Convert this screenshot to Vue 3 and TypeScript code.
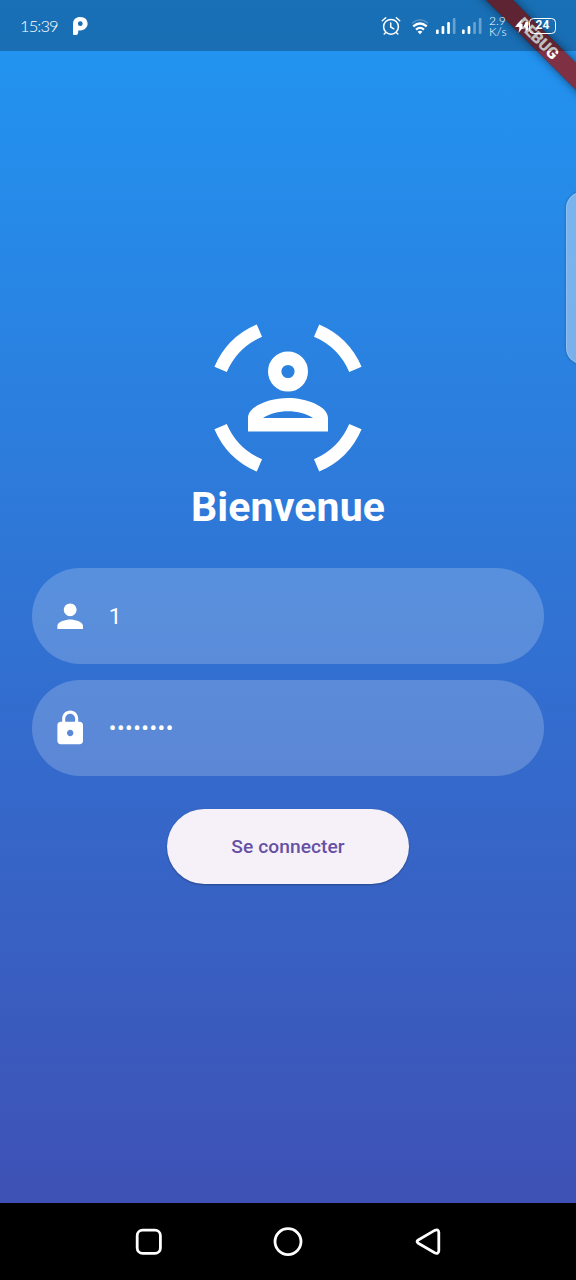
<script setup lang="ts">
import { ref } from 'vue'

interface Field {
  id: string
  icon: string
  value: string
}

interface Signal {
  id: string
  opacities: number[]
}

const person =
  'M12 12c2.21 0 4-1.79 4-4s-1.79-4-4-4-4 1.79-4 4 1.79 4 4 4zm0 2c-2.67 0-8 1.34-8 4v2h16v-2c0-2.66-5.33-4-8-4z'
const lock =
  'M18 8h-1V6c0-2.76-2.24-5-5-5S7 3.24 7 6v2H6c-1.1 0-2 .9-2 2v10c0 1.1.9 2 2 2h12c1.1 0 2-.9 2-2V10c0-1.1-.9-2-2-2zm-6 9c-1.1 0-2-.9-2-2s.9-2 2-2 2 .9 2 2-.9 2-2 2zm3.1-9H8.9V6c0-1.71 1.39-3.1 3.1-3.1 1.71 0 3.1 1.39 3.1 3.1v2z'

const fields = ref<Field[]>([
  { id: 'user', icon: person, value: '1' },
  { id: 'password', icon: lock, value: '••••••••' },
])

const signals: Signal[] = [
  { id: 'sim1', opacities: [1, 1, 1, 0.35] },
  { id: 'sim2', opacities: [1, 1, 0.35, 0.35] },
]
const barHeights = [4.5, 8, 12, 16]
</script>

<template>
  <div class="screen">
    <main class="login">
      <svg class="logo" viewBox="-80 -80 160 160" aria-hidden="true">
        <g fill="none" stroke="#fff" stroke-width="13.4">
          <path
            v-for="angle in [0, 90, 180, 270]"
            :key="angle"
            d="M28.6 -67.4A73.2 73.2 0 0 1 67.4 -28.6"
            :transform="`rotate(${angle})`"
          />
        </g>
        <circle cy="-26.5" r="13.3" fill="none" stroke="#fff" stroke-width="13.4" />
        <path
          fill="#fff"
          fill-rule="evenodd"
          d="M-40 33.5V20C-40 8 -18 0 0 0S40 8 40 20V33.5ZM-25 20H25C19 16 9 13.3 0 13.3S-19 16 -25 20Z"
        />
      </svg>
      <h1 class="title">Bienvenue</h1>
      <div class="fields">
        <label v-for="field in fields" :key="field.id" class="field">
          <svg class="field-icon" viewBox="0 0 24 24" aria-hidden="true">
            <path :d="field.icon" fill="#fff" />
          </svg>
          <span class="field-value">{{ field.value }}</span>
        </label>
      </div>
      <button class="submit" type="button">Se connecter</button>
    </main>

    <div class="edge-handle"></div>

    <div class="debug-clip"><div class="debug">DEBUG</div></div>

    <header class="status">
      <span class="time">15:39</span>
      <svg class="app-mark" width="17" height="20" viewBox="0 0 17 20" aria-hidden="true">
        <path
          fill="#fff"
          fill-rule="evenodd"
          d="M1 8C1 3.5 4 1 8.3 1C12.6 1 15.6 3.8 15.6 7.6S12.6 14.4 8.6 14.4H6.2V16.5Q6 19 4 19H2Q1 19 1 18ZM8.3 5.3A2.4 2.4 0 1 0 8.3 10.1A2.4 2.4 0 1 0 8.3 5.3Z"
        />
      </svg>
      <div class="indicators">
        <svg class="alarm" width="20" height="20" viewBox="0 0 20 20" aria-hidden="true">
          <g fill="none" stroke="#fff" stroke-width="1.5" stroke-linecap="round" stroke-linejoin="round">
            <circle cx="10" cy="10.8" r="7.4" />
            <path d="M9.7 7V11L12.8 12.8M1.3 4.7L4.7 1.8M18.7 4.7L15.3 1.8M4.7 16.5L3.2 18M15.3 16.5L16.8 18" />
          </g>
        </svg>
        <svg class="wifi" width="18" height="16" viewBox="0 0 18 16" aria-hidden="true">
          <g fill="none" stroke="#fff" stroke-width="2.2">
            <path d="M1 4.2Q9 -2.6 17 4.2" opacity="0.25" stroke-width="1.5" />
            <path d="M2.2 7.4Q9 1.6 15.8 7.4" />
            <path d="M5 10.6Q9 7.2 13 10.6" />
          </g>
          <path d="M6.6 12.7Q9 10.6 11.4 12.7L9 15.2Z" fill="#fff" />
        </svg>
        <svg
          v-for="signal in signals"
          :key="signal.id"
          class="signal"
          width="20"
          height="16"
          viewBox="0 0 20 16"
          aria-hidden="true"
        >
          <rect
            v-for="(opacity, i) in signal.opacities"
            :key="i"
            :x="i * 5.6"
            :y="16 - barHeights[i]"
            width="2.7"
            :height="barHeights[i]"
            rx="1"
            fill="#fff"
            :opacity="opacity"
          />
        </svg>
        <span class="speed"><span>2.9</span><span>K/s</span></span>
        <svg class="bolt" width="14" height="14" viewBox="0 0 14 14" aria-hidden="true">
          <path d="M7 0L0 8H4.5L3.5 14L7.5 9V5H5.5ZM13 3V11L10.5 12V8H8.5L10.5 3Z" fill="#fff" />
        </svg>
        <span class="battery">24</span>
      </div>
    </header>

    <nav class="navbar">
      <svg width="28" height="28" viewBox="0 0 28 28" aria-hidden="true">
        <rect x="2.2" y="2.2" width="23.2" height="23.2" rx="5.5" />
      </svg>
      <svg width="30" height="30" viewBox="0 0 30 30" aria-hidden="true">
        <circle cx="15" cy="14.6" r="13" />
      </svg>
      <svg width="28" height="28" viewBox="0 0 28 28" aria-hidden="true">
        <path d="M4.3 12L20.6 2.4Q24.4 .6 24.8 4.3V22.9Q24.4 26.6 20.6 24.8L4.3 15.2Q1.8 13.6 4.3 12Z" />
      </svg>
    </nav>
  </div>
</template>

<style>
body {
  margin: 0;
}
</style>

<style scoped>
.screen {
  position: relative;
  display: flex;
  flex-direction: column;
  width: 576px;
  height: 1280px;
  overflow: hidden;
  font-family: Roboto, sans-serif;
  color: #fff;
}

.login {
  flex: 1;
  display: flex;
  flex-direction: column;
  align-items: center;
  box-sizing: border-box;
  padding: 318px 32px 0;
  background: linear-gradient(#2196f3, #3f51b5);
}

.logo {
  width: 160px;
  height: 160px;
}

.title {
  margin: 2px 0 0;
  font-size: 41px;
  line-height: 54px;
  font-weight: 700;
  letter-spacing: 0.15px;
}

.fields {
  display: flex;
  flex-direction: column;
  gap: 16px;
  width: 100%;
  margin-top: 34px;
}

.field {
  display: flex;
  align-items: center;
  height: 96px;
  box-sizing: border-box;
  padding-left: 19.2px;
  border-radius: 48px;
  background: rgba(255, 255, 255, 0.2);
}

.field-icon {
  width: 38.4px;
  height: 38.4px;
}

.field-value {
  margin-left: 19.2px;
  font-size: 22.6px;
  letter-spacing: 0.5px;
}

.submit {
  width: 242px;
  height: 75px;
  margin-top: 33px;
  padding: 0;
  border: 0;
  border-radius: 38px;
  background: #f6f1f9;
  box-shadow: 0 1px 2px rgba(0, 0, 0, 0.3);
  color: #6750a4;
  font: 500 19.2px Roboto, sans-serif;
  letter-spacing: 0.05px;
}

.edge-handle {
  position: absolute;
  top: 192px;
  right: -22px;
  width: 30px;
  height: 170px;
  border: 1px solid rgba(150, 195, 240, 0.8);
  border-radius: 24px;
  background: rgba(190, 215, 242, 0.55);
  box-shadow: 0 0 3px rgba(0, 0, 0, 0.3);
}

.debug-clip {
  position: absolute;
  top: 0;
  right: 0;
  width: 130px;
  height: 130px;
  overflow: hidden;
}

.debug {
  position: absolute;
  top: 28.9px;
  left: 11.5px;
  width: 160px;
  height: 19.2px;
  transform: rotate(45deg);
  background: linear-gradient(rgba(183, 28, 28, 0.66), rgba(183, 28, 28, 0.66)), rgba(0, 0, 0, 0.4);
  box-shadow: 0 0 10px rgba(0, 0, 0, 0.5);
  font-size: 16px;
  line-height: 19.2px;
  font-weight: 900;
  text-align: center;
}

.status {
  position: absolute;
  top: 0;
  left: 0;
  display: flex;
  align-items: center;
  width: 100%;
  height: 51px;
  box-sizing: border-box;
  padding: 0 20px 0 20px;
  background: rgba(0, 0, 0, 0.25);
}

.time {
  width: 52px;
  font: 300 16.5px Lato, sans-serif;
  letter-spacing: -0.9px;
}

.indicators {
  display: flex;
  align-items: center;
  margin-left: auto;
}

.wifi {
  margin: 2px 7px 0 10px;
}

.signal {
  margin: 1px 6px 0 0;
}

.speed {
  display: flex;
  flex-direction: column;
  width: 19px;
  margin: 0 7px 0 1px;
  font: 300 12px/11px Lato, sans-serif;
}

.battery {
  width: 27px;
  height: 16px;
  box-sizing: border-box;
  border: 1.8px solid #fff;
  border-radius: 4.5px;
  font: 700 12px/13.5px Roboto, sans-serif;
  text-align: center;
}

.navbar {
  display: flex;
  align-items: center;
  justify-content: space-between;
  height: 77px;
  box-sizing: border-box;
  padding: 0 134.5px;
  background: #000;
}

.navbar svg {
  fill: none;
  stroke: #fff;
  stroke-width: 2.8;
}
</style>
